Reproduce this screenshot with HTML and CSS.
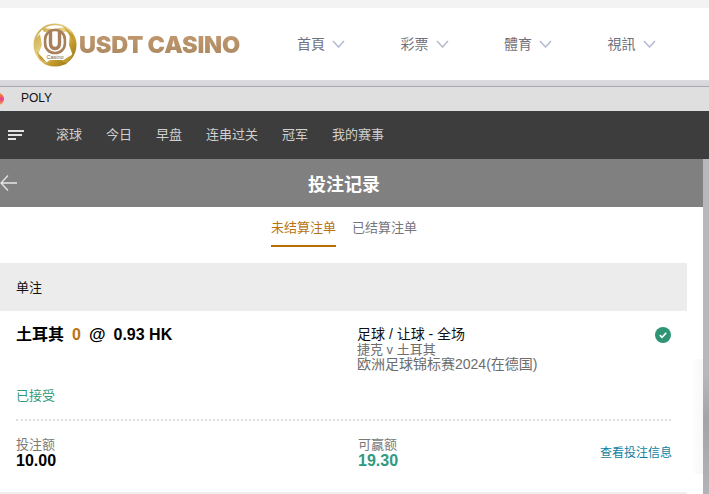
FILE: index.html
```html
<!DOCTYPE html>
<html lang="zh">
<head>
<meta charset="utf-8">
<title>USDT CASINO</title>
<link rel="stylesheet" href="styles.css">
</head>
<body>
<div class="top-strip"></div>
<header class="site-header">
  <div class="logo">
    <svg class="logo-mark" width="44" height="44" viewBox="0 0 44 44">
      <defs>
        <linearGradient id="gold" x1="0" y1="0" x2="1" y2="1">
          <stop offset="0" stop-color="#c2a040"/>
          <stop offset=".4" stop-color="#e8d386"/>
          <stop offset=".7" stop-color="#bf9726"/>
          <stop offset="1" stop-color="#8d6a1e"/>
        </linearGradient>
      </defs>
      <circle cx="22" cy="22" r="20.600" fill="#fff" stroke="url(#gold)" stroke-width="1.800"/>
      <path d="M9 5 20 6 33 4 37 8 31 9 21 8 11 9ZM2 16 7 11 9 22 5 32 2 26ZM42 15 37 9 36 22 40 33 42 26ZM11 41 17 37 29 37 34 41 22 43Z" fill="url(#gold)"/>
      <path d="M30 3 40 12 41 20 35 10ZM29 38 40 31 34 40ZM3 28 9 34 14 40 7 36Z" fill="#c29c2c"/>
      <rect x="12.100" y="7" width="19.800" height="23" rx="9.500" fill="#fff" stroke="#a97f5c" stroke-width="2.600"/>
      <path d="M17.500 8V20Q17.500 25.500 22 25.500T26.500 20V8" fill="none" stroke="#a97f5c" stroke-width="3.400"/>
      <text class="mark-text" x="22" y="36" text-anchor="middle">Casino</text>
    </svg>
    <span class="logo-text">USDT CASINO</span>
  </div>
  <nav class="site-nav">
    <a class="site-link">首頁<svg class="chev" width="13" height="8" viewBox="0 0 13 8"><path d="M1 1 6.500 7 12 1"/></svg></a>
    <a class="site-link">彩票<svg class="chev" width="13" height="8" viewBox="0 0 13 8"><path d="M1 1 6.500 7 12 1"/></svg></a>
    <a class="site-link">體育<svg class="chev" width="13" height="8" viewBox="0 0 13 8"><path d="M1 1 6.500 7 12 1"/></svg></a>
    <a class="site-link">視訊<svg class="chev" width="13" height="8" viewBox="0 0 13 8"><path d="M1 1 6.500 7 12 1"/></svg></a>
  </nav>
</header>
<div class="header-shadow"></div>
<div class="frame-bar">
  <span class="frame-dot"></span>
  <span class="frame-title">POLY</span>
</div>
<nav class="main-nav">
  <span class="menu-icon"><i class="l1"></i><i class="l2"></i><i class="l3"></i></span>
  <a>滚球</a><a>今日</a><a>早盘</a><a>连串过关</a><a>冠军</a><a>我的赛事</a>
</nav>
<div class="lower">
  <main class="content">
    <div class="title-bar">
      <svg class="back" width="17" height="17" viewBox="0 0 17 17"><path d="M8 .5 1 8 8 15.500M1 8H17"/></svg>
      <h1>投注记录</h1>
    </div>
    <div class="column">
      <div class="tabs">
        <a class="tab active">未结算注单</a>
        <a class="tab">已结算注单</a>
      </div>
      <div class="section-head">单注</div>
      <article class="bet">
        <div class="bet-top">
          <div class="pick"><span>土耳其</span><span class="line-val">0</span><span class="at">@</span><span>0.93 HK</span></div>
          <div class="event">
            <div class="market">足球 / 让球 - 全场</div>
            <div class="teams">捷克 v 土耳其</div>
            <div>欧洲足球锦标赛2024(在德国)</div>
          </div>
          <svg class="ok" width="16" height="16" viewBox="0 0 16 16"><circle cx="8" cy="8" r="8"/><path d="M4.800 8.200 7 10.300 11.200 5.900"/></svg>
        </div>
        <div class="accepted">已接受</div>
        <div class="bet-foot">
          <div class="stat"><div>投注额</div><strong>10.00</strong></div>
          <div class="stat"><div>可赢额</div><strong class="win">19.30</strong></div>
          <a class="details">查看投注信息</a>
        </div>
      </article>
    </div>
  </main>
  <div class="rail"></div>
</div>
</body>
</html>
```
FILE: styles.css
```css
* { box-sizing: border-box; }
html, body { margin: 0; height: 494px; overflow: hidden; }
body {
  background: #fff;
  font-family: "Liberation Sans", "Noto Sans CJK SC", sans-serif;
  font-size: 13px;
}
.top-strip { height: 8px; background: #f3f3f3; }
.site-header {
  height: 72px;
  display: flex;
  align-items: center;
  padding-left: 33px;
  background: #fff;
}
.logo { width: 264px; flex: none; display: flex; align-items: center; }
.logo-mark { flex: none; margin-top: 1px; }
.mark-text { font-size: 5.500px; fill: #6d6350; font-family: "Liberation Sans", sans-serif; }
.logo-text {
  font-family: Inter, "Liberation Sans", sans-serif;
  font-weight: 900;
  font-size: 23.500px;
  letter-spacing: -.2px;
  background: linear-gradient(#c49b72, #a9875f);
  -webkit-background-clip: text;
  background-clip: text;
  color: transparent;
  margin-left: 2px;
  white-space: nowrap;
}
.site-nav { display: flex; flex: none; margin-top: -2px; }
.site-link {
  width: 103.500px;
  display: flex;
  align-items: center;
  gap: 7px;
  font-size: 14px;
  color: #6f7180;
}
.site-link:last-child { width: 70px; }
.chev { fill: none; stroke: #b5bad0; stroke-width: 1.5; margin-top: 2px; }
.header-shadow { height: 6px; background: linear-gradient(#dcdcdf, #d6d6da); }
.frame-bar {
  height: 25px;
  border-top: 1px solid #a9a9b0;
  background: #dfdfdf;
  display: flex;
  align-items: center;
  padding: 0 0 2px 21px;
  position: relative;
  font-size: 12px;
  color: #111;
}
.frame-dot {
  position: absolute;
  left: -8px;
  top: 6px;
  width: 12px;
  height: 12px;
  border-radius: 50%;
  background: linear-gradient(#f7931e, #e83e8c 50%, #f9a63a);
}
.main-nav {
  height: 48px;
  background: #3d3d3d;
  display: flex;
  align-items: center;
  padding-left: 8px;
  gap: 24px;
  color: #cfcfcf;
}
.main-nav a { line-height: 48px; }
.menu-icon {
  width: 24px;
  display: flex;
  flex-direction: column;
  gap: 2px;
}
.menu-icon i { display: block; height: 2px; background: #e4e4e4; }
.menu-icon .l1 { width: 16px; }
.menu-icon .l2 { width: 14px; }
.menu-icon .l3 { width: 8px; }
.lower { display: flex; height: 335px; }
.content { width: 703px; flex: none; }
.rail {
  width: 6px;
  position: relative;
  background: linear-gradient(#b9b7bc 0, #b9b7bc 64%, #a3a3a8 78%, #b4b4b8 100%);
}
.rail::before {
  content: "";
  position: absolute;
  right: 100%;
  top: 200px;
  bottom: 20px;
  width: 12px;
  background: linear-gradient(to right, rgba(0, 0, 0, 0), rgba(0, 0, 0, .03));
}
.title-bar {
  height: 48px;
  background: #808080;
  display: flex;
  align-items: center;
  justify-content: center;
  padding-right: 15px;
  position: relative;
}
.title-bar h1 { margin: 0; font-size: 18px; font-weight: 700; color: #fff; }
.back {
  position: absolute;
  left: 0;
  top: 16px;
  fill: none;
  stroke: #e6e6e6;
  stroke-width: 1.300;
}
.column { width: 687px; }
.tabs {
  height: 56px;
  display: flex;
  justify-content: center;
  gap: 16px;
  padding: 11px 0 0 1px;
}
.tab {
  height: 29px;
  color: #74767c;
  line-height: 19px;
}
.tab.active { color: #b8730f; border-bottom: 2px solid #b86e00; }
.section-head {
  height: 48px;
  line-height: 49px;
  padding-left: 16px;
  background: #ececec;
  color: #111;
}
.bet { height: 183px; padding: 14px 0 0 16px; width: 671px; position: relative; }
.bet::after {
  content: "";
  position: absolute;
  left: 0;
  right: -16px;
  bottom: 0;
  height: 2px;
  background: #efefef;
}
.bet-top { display: flex; height: 54px; }
.pick {
  width: 341px;
  display: flex;
  gap: 8px;
  font-size: 16px;
  font-weight: 700;
  color: #000;
  line-height: 20px;
}
.line-val { color: #b8730f; }
.at { font-size: 17px; }
.event { flex: 1; color: #6d6d6d; line-height: 15px; padding-top: 2px; font-size: 14px; }
.market { color: #111; }
.teams { font-size: 13px; }
.ok { flex: none; margin-top: 2px; }
.ok circle { fill: #2e9474; }
.ok path { fill: none; stroke: #fff; stroke-width: 1.600; }
.accepted { color: #2e9a80; line-height: 18px; margin-top: 8px; }
.bet-foot {
  margin-top: 14px;
  border-top: 2px dotted #ddd;
  padding-top: 16px;
  display: flex;
  align-items: center;
  color: #7a7a7a;
  line-height: 15px;
}
.stat { width: 342px; }
.stat strong { display: block; font-size: 16px; color: #000; line-height: 17px; }
.stat strong.win { color: #2e9a80; }
.stat + .stat { width: 242px; }
.details { font-size: 12px; color: #0f7f9f; white-space: nowrap; margin: 0 -1px 0 auto; }
```
